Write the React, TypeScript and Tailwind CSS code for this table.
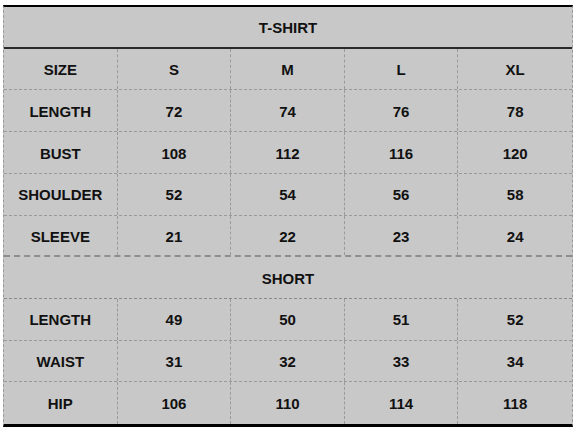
import React from "react";

const tshirt: string[][] = [
  ["SIZE", "S", "M", "L", "XL"],
  ["LENGTH", "72", "74", "76", "78"],
  ["BUST", "108", "112", "116", "120"],
  ["SHOULDER", "52", "54", "56", "58"],
  ["SLEEVE", "21", "22", "23", "24"],
];
const shorts: string[][] = [
  ["LENGTH", "49", "50", "51", "52"],
  ["WAIST", "31", "32", "33", "34"],
  ["HIP", "106", "110", "114", "118"],
];

function DataRow({ cells, border }: { cells: string[]; border: string }) {
  return (
    <div className={`grid grid-cols-5 ${border}`}>
      {cells.map((c, i) => (
        <div
          key={i}
          className={`flex items-center justify-center pt-[3px] ${i < 4 ? "border-r border-dashed border-[#9a9a9a]" : ""}`}
        >
          {c}
        </div>
      ))}
    </div>
  );
}

export default function App() {
  return (
    <div className="w-[577px] h-[429px] bg-white pt-[5px] pl-[3px]">
      <div
        className="w-[570px] bg-[#c8c8c8] border-t-2 border-t-black border-b-[3px] border-b-black border-l border-r border-l-[#9a9a9a] border-r-[#9a9a9a] border-dashed text-[15px] font-bold text-[#111]"
        style={{ fontFamily: '"Liberation Sans", Arial, sans-serif', borderTopStyle: "solid", borderBottomStyle: "solid" }}
      >
        <div className="grid h-[417px] grid-rows-[repeat(10,1fr)]">
          <div className="flex items-center justify-center pt-[3px] border-b-2 border-[#2a2a2a]">T-SHIRT</div>
          {tshirt.map((r, i) => (
            <DataRow
              key={i}
              cells={r}
              border={i < 4 ? "border-b border-dashed border-[#9a9a9a]" : "border-b-2 border-dashed border-[#8e8e8e]"}
            />
          ))}
          <div className="flex items-center justify-center pt-[3px] border-b border-dashed border-[#8a8a8a]">SHORT</div>
          {shorts.map((r, i) => (
            <DataRow key={i} cells={r} border={i < 2 ? "border-b border-dashed border-[#9a9a9a]" : ""} />
          ))}
        </div>
      </div>
    </div>
  );
}
